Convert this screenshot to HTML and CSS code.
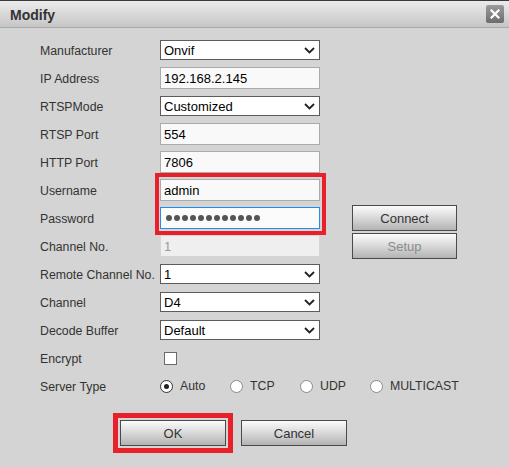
FILE: index.html
```html
<!DOCTYPE html>
<html>
<head>
<meta charset="utf-8">
<title>Modify</title>
<link rel="stylesheet" href="styles.css">
</head>
<body>
<div class="dialog">
  <div class="titlebar">
    <span class="title">Modify</span>
    <button class="close" type="button" aria-label="Close">
      <svg width="10" height="10" viewBox="0 0 10 10"><path d="M1.5 1.5 L8.5 8.5 M8.5 1.5 L1.5 8.5" stroke="#fff" stroke-width="2.2" stroke-linecap="square"/></svg>
    </button>
  </div>
  <div class="form">
    <div class="row">
      <span class="lbl">Manufacturer</span>
      <div class="select"><span>Onvif</span><svg class="chev" width="11" height="7" viewBox="0 0 11 7"><polyline points="1,1 5.5,5.5 10,1" fill="none" stroke="#222" stroke-width="1.8"/></svg></div>
    </div>
    <div class="row">
      <span class="lbl">IP Address</span>
      <div class="input">192.168.2.145</div>
    </div>
    <div class="row">
      <span class="lbl">RTSPMode</span>
      <div class="select"><span>Customized</span><svg class="chev" width="11" height="7" viewBox="0 0 11 7"><polyline points="1,1 5.5,5.5 10,1" fill="none" stroke="#222" stroke-width="1.8"/></svg></div>
    </div>
    <div class="row">
      <span class="lbl">RTSP Port</span>
      <div class="input">554</div>
    </div>
    <div class="row">
      <span class="lbl">HTTP Port</span>
      <div class="input">7806</div>
    </div>
    <div class="row">
      <span class="lbl">Username</span>
      <div class="hl-anchor">
        <div class="input">admin</div>
        <div class="highlight hl-cred"></div>
      </div>
    </div>
    <div class="row">
      <span class="lbl">Password</span>
      <div class="input focused"><span class="dots"><i></i><i></i><i></i><i></i><i></i><i></i><i></i><i></i><i></i><i></i><i></i><i></i></span></div>
      <button class="btn side" type="button">Connect</button>
    </div>
    <div class="row">
      <span class="lbl">Channel No.</span>
      <div class="input disabled">1</div>
      <button class="btn side muted" type="button">Setup</button>
    </div>
    <div class="row">
      <span class="lbl">Remote Channel No.</span>
      <div class="select"><span>1</span><svg class="chev" width="11" height="7" viewBox="0 0 11 7"><polyline points="1,1 5.5,5.5 10,1" fill="none" stroke="#222" stroke-width="1.8"/></svg></div>
    </div>
    <div class="row">
      <span class="lbl">Channel</span>
      <div class="select"><span>D4</span><svg class="chev" width="11" height="7" viewBox="0 0 11 7"><polyline points="1,1 5.5,5.5 10,1" fill="none" stroke="#222" stroke-width="1.8"/></svg></div>
    </div>
    <div class="row">
      <span class="lbl">Decode Buffer</span>
      <div class="select"><span>Default</span><svg class="chev" width="11" height="7" viewBox="0 0 11 7"><polyline points="1,1 5.5,5.5 10,1" fill="none" stroke="#222" stroke-width="1.8"/></svg></div>
    </div>
    <div class="row">
      <span class="lbl">Encrypt</span>
      <input class="check" type="checkbox">
    </div>
    <div class="row">
      <span class="lbl">Server Type</span>
      <div class="radios">
        <label class="opt"><input class="radio" type="radio" name="st" checked><span>Auto</span></label>
        <label class="opt"><input class="radio" type="radio" name="st"><span>TCP</span></label>
        <label class="opt"><input class="radio" type="radio" name="st"><span>UDP</span></label>
        <label class="opt last"><input class="radio" type="radio" name="st"><span>MULTICAST</span></label>
      </div>
    </div>
  </div>
  <div class="footer">
    <div class="hl-anchor">
      <button class="btn main" type="button">OK</button>
      <div class="highlight hl-ok"></div>
    </div>
    <button class="btn main" type="button">Cancel</button>
  </div>
</div>
</body>
</html>
```

FILE: styles.css
```css
* { box-sizing: border-box; }
html, body { margin: 0; padding: 0; }
body {
  width: 509px;
  height: 467px;
  background: #d4d4d4;
  font-family: "Liberation Sans", Arial, sans-serif;
  overflow: hidden;
}
.dialog { width: 509px; height: 467px; }

.titlebar {
  height: 28px;
  border-top: 1px solid #3a3a3a;
  border-bottom: 1px solid #a9a9a9;
  background: linear-gradient(#ebebeb, #c6c6c6);
  display: flex;
  align-items: center;
  justify-content: space-between;
  padding: 0 5px 0 10px;
}
.title {
  font-size: 14px;
  font-weight: bold;
  color: #333;
  padding-top: 1px;
}
.close {
  width: 18px;
  height: 18px;
  margin: 0;
  padding: 0;
  border: none;
  border-radius: 2px;
  background: linear-gradient(#9c9c9c, #6c6c6c);
  display: flex;
  align-items: center;
  justify-content: center;
}

.form {
  padding: 8px 0 0 40px;
}
.row {
  height: 28px;
  display: flex;
  align-items: center;
}
.lbl {
  width: 120px;
  font-size: 12.3px;
  color: #333;
  white-space: nowrap;
  padding-top: 1px;
}

.select {
  width: 160px;
  height: 20px;
  border: 1px solid #5c5c5c;
  background: #fff;
  display: flex;
  align-items: center;
  justify-content: space-between;
  padding: 0 4px 0 3px;
  font-size: 13px;
  color: #000;
}
.chev { display: block; }

.input {
  width: 160px;
  height: 22px;
  border: 1px solid #ababab;
  background: #f9f9f9;
  display: flex;
  align-items: center;
  padding-left: 3px;
  font-size: 13px;
  color: #000;
}
.input.focused {
  border-color: #1f8ef1;
  background: #fbfbfb;
  padding-left: 5px;
}
.input.disabled {
  border-color: #d6d6d6;
  background: #efefef;
  color: #9b9b9b;
}
.dots { display: flex; gap: 2px; }
.dots i {
  display: block;
  width: 6px;
  height: 6px;
  border-radius: 50%;
  background: #555;
}

.hl-anchor { position: relative; }
.highlight {
  position: absolute;
  border: 4px solid #e8202a;
  pointer-events: none;
}
.hl-cred {
  left: -5px;
  top: -6px;
  width: 171px;
  height: 62px;
}
.hl-ok {
  left: -7px;
  top: -7px;
  width: 120px;
  height: 40px;
  border-width: 5px;
}

.btn {
  margin: 0;
  padding: 0;
  height: 26px;
  border: 1px solid #4a4a4a;
  background: linear-gradient(#fbfbfb, #dcdcdc 45%, #b3b3b3);
  font-family: "Liberation Sans", Arial, sans-serif;
  font-size: 13px;
  color: #333;
}
.side {
  width: 105px;
  margin-left: 32px;
}
.muted { color: #8c8c8c; }
.main { width: 106px; display: block; }

.check {
  appearance: none;
  -webkit-appearance: none;
  margin: 0 0 0 4px;
  width: 13px;
  height: 13px;
  border: 1px solid #6a6a6a;
  background: #fff;
}

.radios { display: flex; }
.opt {
  width: 70px;
  flex-shrink: 0;
  display: flex;
  align-items: center;
  gap: 7px;
  font-size: 12.3px;
  color: #333;
}
.opt.last { width: auto; }
.radio {
  appearance: none;
  -webkit-appearance: none;
  flex-shrink: 0;
  margin: 0;
  width: 13px;
  height: 13px;
  border: 1px solid #8a8a8a;
  border-radius: 50%;
  background: #fff;
  display: flex;
  align-items: center;
  justify-content: center;
}
.radio:checked { border-color: #333; }
.radio:checked::after {
  content: "";
  width: 5px;
  height: 5px;
  border-radius: 50%;
  background: #222;
}

.footer {
  display: flex;
  gap: 15px;
  padding-left: 120px;
  margin-top: 20px;
}
```
